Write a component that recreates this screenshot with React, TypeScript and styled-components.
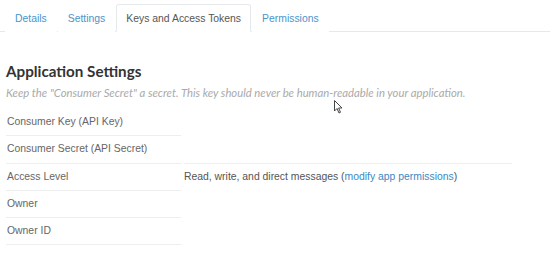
import * as React from 'react';
import styled, { createGlobalStyle } from 'styled-components';

const GlobalStyle = createGlobalStyle`
    html, body {
        margin: 0;
        padding: 0;
        background: #fff;
    }
    body {
        font-family: "Liberation Sans", Arial, sans-serif;
    }
`;

const Page = styled.div`
    position: relative;
    width: 550px;
    height: 279px;
    overflow: hidden;
    background: #fff;
`;

const TabBar = styled.ul`
    display: flex;
    list-style: none;
    margin: 0;
    padding: 4px 0 0 5px;
    border-bottom: 1px solid #e6e9eb;
`;

const Tab = styled.li<{ active?: boolean }>`
    margin: 0 1px -1px 0;
    padding: 0 9px;
    height: 26px;
    line-height: 27px;
    font-size: 10.4px;
    color: ${(p) => (p.active ? '#555' : '#4a94cc')};
    background: #fff;
    border: 1px solid ${(p) => (p.active ? '#e6e9eb' : 'transparent')};
    border-bottom-color: ${(p) => (p.active ? '#fff' : 'transparent')};
    border-radius: 3px 3px 0 0;
`;

const Content = styled.div`
    padding: 29px 6px 0 6px;
`;

const Title = styled.h2`
    margin: 0;
    font-family: Lato, "Open Sans", sans-serif;
    font-weight: 700;
    font-size: 15.2px;
    line-height: 20px;
    color: #333;
`;

const Hint = styled.p`
    margin: 5px 0 9px;
    font-family: Lato, "Open Sans", sans-serif;
    font-style: italic;
    font-size: 11.3px;
    line-height: 14px;
    color: #aaa;
`;

const Table = styled.div`
    display: grid;
    grid-template-columns: 178px 328px;
    font-size: 10.4px;
    color: #666;
`;

const Label = styled.div`
    height: 26.3px;
    line-height: 25px;
    padding-left: 1px;
    margin-right: 3px;
    border-bottom: 1px solid #eceeef;
`;

const Value = styled.div<{ ruled?: boolean }>`
    height: 26.3px;
    line-height: 25px;
    color: #555;
    border-top: 1px solid ${(p) => (p.ruled ? '#eceeef' : 'transparent')};
    margin-top: -1px;
`;

const Link = styled.a`
    color: #3b88c3;
    text-decoration: none;
`;

const Cursor = styled.svg`
    position: absolute;
    left: 334px;
    top: 100px;
`;

const rows: { label: string; value?: React.ReactNode }[] = [
    { label: 'Consumer Key (API Key)' },
    { label: 'Consumer Secret (API Secret)' },
    {
        label: 'Access Level',
        value: (
            <>
                Read, write, and direct messages (<Link href="#">modify app permissions</Link>)
            </>
        )
    },
    { label: 'Owner' },
    { label: 'Owner ID' }
];

const App: React.FC = () => {
    return (
        <Page>
            <GlobalStyle />
            <TabBar>
                <Tab>Details</Tab>
                <Tab>Settings</Tab>
                <Tab active>Keys and Access Tokens</Tab>
                <Tab>Permissions</Tab>
            </TabBar>
            <Content>
                <Title>Application Settings</Title>
                <Hint>Keep the "Consumer Secret" a secret. This key should never be human-readable in your application.</Hint>
                <Table>
                    {rows.map((row) => (
                        <React.Fragment key={row.label}>
                            <Label>{row.label}</Label>
                            <Value ruled={!!row.value}>{row.value}</Value>
                        </React.Fragment>
                    ))}
                </Table>
            </Content>
            <Cursor width="10" height="14" viewBox="0 0 10 14">
                <path d="M0.5 0.5 L0.5 11 L3 8.5 L5 13 L6.5 12.3 L4.6 8 L8 8 Z" fill="#fff" stroke="#444" strokeWidth="1" />
            </Cursor>
        </Page>
    );
};

export default App;
